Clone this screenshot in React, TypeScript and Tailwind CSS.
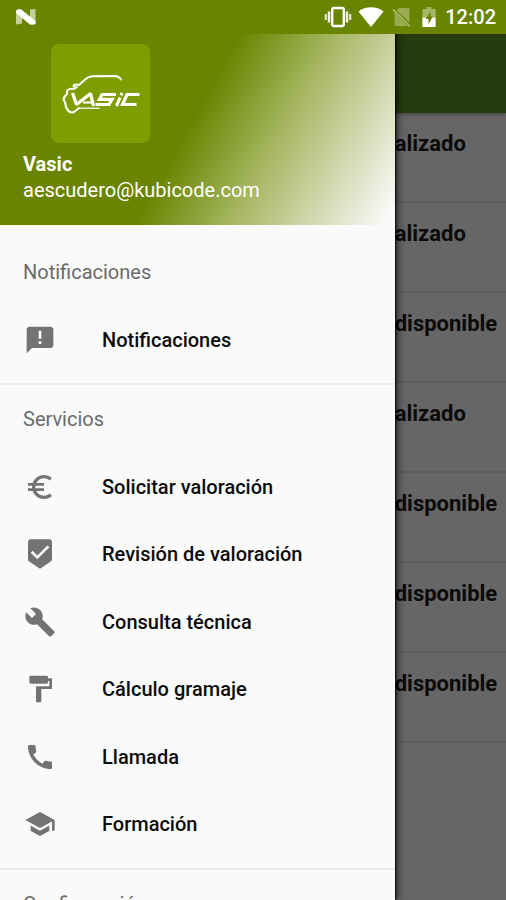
import type { IconType } from "react-icons";
import {
  MdAnnouncement,
  MdBeenhere,
  MdBuild,
  MdCall,
  MdEuroSymbol,
  MdFormatPaint,
  MdSchool,
} from "react-icons/md";

type MenuItem = {
  label: string;
  icon: IconType;
};

const services: MenuItem[] = [
  { label: "Solicitar valoración", icon: MdEuroSymbol },
  { label: "Revisión de valoración", icon: MdBeenhere },
  { label: "Consulta técnica", icon: MdBuild },
  { label: "Cálculo gramaje", icon: MdFormatPaint },
  { label: "Llamada", icon: MdCall },
  { label: "Formación", icon: MdSchool },
];

const states = [
  "alizado",
  "alizado",
  "disponible",
  "alizado",
  "disponible",
  "disponible",
  "disponible",
];

function StatusBar() {
  return (
    <div className="flex h-[34px] shrink-0 items-center bg-[#6a8400] pl-4 pr-[10px] text-white">
      <svg width="20" height="16" viewBox="0 0 20 16" aria-hidden="true">
        <path d="M0 2l6 3v9.500l-6 1z" fill="#fff" opacity=".6" />
        <path d="M14 .5l5.500-.5v14.500l-5.500-3z" fill="#fff" opacity=".6" />
        <path d="M0 1.500Q1 0 5 .3L19.500 12v3Q18 16 14 15.500L0 4z" fill="#fff" />
      </svg>

      <div className="ml-auto flex items-center">
        <svg width="28" height="22" viewBox="0 0 28 22" aria-hidden="true">
          <rect x="8.200" y="2" width="11.600" height="18" rx="1.500" fill="none" stroke="#fff" strokeWidth="2.400" />
          <path d="M5 5.500v11M23 5.500v11" stroke="#fff" strokeWidth="2.400" opacity=".9" />
          <path d="M1.800 8v6M26.200 8v6" stroke="#fff" strokeWidth="2.200" opacity=".8" />
        </svg>
        <svg className="ml-[6px]" width="26" height="20" viewBox="0 0 26 20" aria-hidden="true">
          <path d="M13 20L.5 4.500Q6 .3 13 .3T25.500 4.500z" fill="#fff" />
        </svg>
        <svg className="ml-2" width="20" height="20" viewBox="0 0 20 20" aria-hidden="true">
          <path d="M7 1h9q1.500 0 1.500 1.500v13L4.500 3.500zM2.500 5.500L15.500 19H4q-1.500 0-1.500-1.500z" fill="#fff" opacity=".32" />
          <path d="M1 2.500L18 19.500" stroke="#fff" strokeWidth="1.800" opacity=".4" />
        </svg>
        <svg className="ml-[10px]" width="14" height="20" viewBox="0 0 14 21" aria-hidden="true">
          <path d="M4.500 0h5v2H13q1 0 1 1v8H0V3q0-1 1-1h3.500z" fill="#fff" opacity=".4" />
          <path d="M0 11h14v9q0 1-1 1H1q-1 0-1-1z" fill="#fff" />
          <path d="M8.500 4.500L3.500 12.500h3v5.500l4.500-8H8.500z" fill="#6a8400" />
        </svg>
        <span className="ml-[9px] text-xl font-medium">12:02</span>
      </div>
    </div>
  );
}

function Logo() {
  return (
    <div className="ml-7 flex size-[99px] items-center justify-center rounded-lg bg-[#7f9d00]">
      <svg width="80" height="42" viewBox="0 0 80 42" role="img" aria-label="Vasic">
        <g fill="none" stroke="#fff" strokeLinecap="round" strokeLinejoin="round">
          <path d="M60 6.500Q58 3.200 53 3L31 3.200Q27 3.500 23.500 7L18 12Q13 10.500 12.500 13L16 14.500" strokeWidth="1.900" />
          <path d="M14 15.500Q7 15.500 6 18L6 21Q2.500 24 2.500 27L4 29L5 34Q8 41 13 39L18 35" strokeWidth="2" />
          <path d="M17 35.300H38" strokeWidth="1.500" opacity=".85" />
        </g>
        <g fill="none" stroke="#fff" strokeWidth="3.200">
          <path d="M11.500 20L15.500 31.500L29.500 20.500L32.500 33" strokeLinejoin="bevel" />
          <path d="M22 29.500H31" strokeWidth="2.200" />
          <path d="M55 21.500H41L38.500 26.300H51L48 31.500H34.500" />
          <path d="M59 24.500L55.500 33M61 20L60 22.300" />
          <path d="M78.500 21.500H66L61.500 31.500H75.500" />
        </g>
      </svg>
    </div>
  );
}

function DrawerItem({ label, icon: Icon }: MenuItem) {
  return (
    <button type="button" className="flex min-h-[67px] w-full items-center gap-[46px] pl-6 text-left text-[#0c0c0c]">
      <Icon className="size-8 shrink-0 text-[#737373]" />
      <span className="text-xl font-medium">{label}</span>
    </button>
  );
}

function SectionTitle({ children }: { children: string }) {
  return (
    <h2 className="flex h-[68px] items-center pl-[23px] text-xl text-[#6a6a6a]">{children}</h2>
  );
}

function Drawer() {
  return (
    <aside className="relative z-10 w-[78%] shrink-0 overflow-hidden bg-[#fafafa] shadow-[1px_0_2px_#000,3px_0_8px_rgba(0,0,0,0.5)]">
      <header className="bg-[linear-gradient(119deg,#6a8400_48%,#a3b45c_66%,#fafafa_98%)] pb-[21px] pl-[23px] pt-[10px] text-white">
        <Logo />
        <p className="mt-2 text-xl font-bold leading-[26px]">Vasic</p>
        <p className="text-xl leading-[27px]">aescudero@kubicode.com</p>
      </header>

      <nav>
        <section className="pb-[10px] pt-[13px]">
          <SectionTitle>Notificaciones</SectionTitle>
          <DrawerItem label="Notificaciones" icon={MdAnnouncement} />
        </section>

        <section className="border-t-2 border-[#ececec] pb-[10px]">
          <SectionTitle>Servicios</SectionTitle>
          <div className="grid min-h-[405px] auto-rows-fr">
            {services.map((item) => (
              <DrawerItem key={item.label} {...item} />
            ))}
          </div>
        </section>

        <section className="border-t-2 border-[#ececec]">
          <SectionTitle>Configuración</SectionTitle>
        </section>
      </nav>
    </aside>
  );
}

export default function App() {
  return (
    <div className="flex h-screen flex-col overflow-hidden font-[Roboto,sans-serif]">
      <StatusBar />

      <div className="flex min-h-0 flex-1 overflow-hidden">
        <Drawer />

        {/* Lista atenuada detrás del menú */}
        <main className="min-w-0 flex-1 bg-[#666]">
          <div className="h-[79px] bg-[#243c0f] shadow-[0_1px_4px_rgba(0,0,0,0.4)]" />
          <ul>
            {states.map((state, i) => (
              <li key={i} className="h-[90px] border-b-2 border-[#5e5e5e] pt-[17px] text-[22px] font-bold leading-7 text-[#0a0a0a]">
                {state}
              </li>
            ))}
          </ul>
        </main>
      </div>
    </div>
  );
}
